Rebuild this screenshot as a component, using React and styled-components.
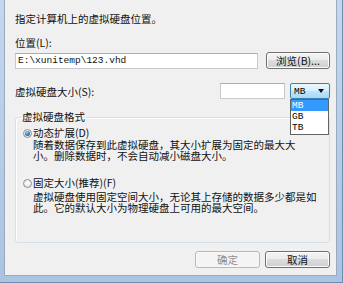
import React from "react";
import styled, { createGlobalStyle } from "styled-components";

const Global = createGlobalStyle`
  html, body { margin: 0; padding: 0; background: #f0f0f0; }
  * { box-sizing: border-box; }
`;

const FONT = `"Noto Sans CJK SC", "Noto Sans", sans-serif`;
const MONO = `"Liberation Mono", "DejaVu Sans Mono", monospace`;

const Frame = styled.div`
  width: 343px;
  height: 283px;
  background: linear-gradient(180deg, #c3d7ee 0%, #aac3e1 100%);
  padding: 0 6px 7px 4px;
  display: flex;
  box-shadow: inset -1px -1px 0 #6f8db3;
  font-family: ${FONT};
  font-size: 10.5px;
  color: #111;
`;

const Panel = styled.div`
  flex: 1;
  position: relative;
  display: flex;
  flex-direction: column;
  background: #f0f0f0;
  border-left: 1px solid #9aabbf;
  border-right: 1px solid #9aabbf;
  border-bottom: 1px solid #9aabbf;
  padding: 12px 6px 0 10px;
`;

const Text = styled.div`
  line-height: 13px;
  margin-top: ${(p) => p.$mt || 0}px;
  white-space: nowrap;
`;

const Row = styled.div`
  display: flex;
  align-items: center;
  gap: ${(p) => p.$gap || 0}px;
  margin-top: ${(p) => p.$mt || 0}px;
  height: ${(p) => p.$h || 17}px;
`;

const Input = styled.div`
  flex: ${(p) => (p.$w ? "none" : 1)};
  width: ${(p) => (p.$w ? `${p.$w}px` : "auto")};
  height: 16px;
  background: #fff;
  border: 1px solid #c5cad1;
  border-top-color: #abadb3;
  font-family: ${MONO};
  font-size: 9.5px;
  line-height: 14px;
  padding-left: 2px;
  color: #111;
  white-space: nowrap;
`;

const Button = styled.div`
  width: ${(p) => p.$w}px;
  height: 17px;
  border: 1px solid ${(p) => (p.$disabled ? "#b5b9bd" : "#707070")};
  border-radius: 3px;
  background: ${(p) =>
    p.$disabled
      ? "#f4f4f4"
      : "linear-gradient(180deg, #f4f4f4 0%, #ececec 45%, #dcdcdc 50%, #d0d0d0 100%)"};
  box-shadow: inset 0 0 0 1px ${(p) => (p.$disabled ? "#f8f8f8" : "#fcfcfc")};
  color: ${(p) => (p.$disabled ? "#8d8d8d" : "#111")};
  display: flex;
  align-items: center;
  justify-content: center;
  line-height: 13px;
  white-space: nowrap;
`;

const Spacer = styled.div`
  flex: 1;
`;

const Select = styled.div`
  width: 40px;
  height: 16px;
  border: 1px solid #3c7fb1;
  border-radius: 2px;
  background: linear-gradient(180deg, #eaf6fd 0%, #d9f0fc 45%, #bee6fd 50%, #a7d9f5 100%);
  display: flex;
  align-items: center;
  padding: 0 5px 0 3px;
  font-family: ${MONO};
  font-size: 9.5px;
  color: #000;
`;

const Arrow = styled.span`
  margin-left: auto;
  width: 0;
  height: 0;
  border-left: 3.5px solid transparent;
  border-right: 3.5px solid transparent;
  border-top: 4px solid #111;
`;

const DropList = styled.div`
  position: absolute;
  left: 285px;
  top: 99px;
  width: 39px;
  background: #fff;
  border: 1px solid #646464;
  padding: 0 0 1px;
  z-index: 2;
`;

const Option = styled.div`
  height: 11px;
  line-height: 11px;
  padding-left: 1px;
  font-family: ${MONO};
  font-size: 9.5px;
  background: ${(p) => (p.$active ? "#3399ff" : "transparent")};
  color: ${(p) => (p.$active ? "#fff" : "#000")};
`;

const Group = styled.fieldset`
  margin: 12px 0 0 0;
  padding: 0 0 29px 7px;
  border: 1px solid #d5dfe5;
  border-radius: 3px;
  box-shadow: inset 1px 1px 0 #fff;
  min-width: 0;
`;

const Legend = styled.legend`
  margin-left: -2px;
  padding: 0 1px;
  line-height: 12px;
`;

const RadioRow = styled.div`
  display: flex;
  align-items: center;
  height: 12px;
  line-height: 12px;
  margin-top: ${(p) => p.$mt}px;
  white-space: nowrap;
`;

const Radio = styled.span`
  width: 9px;
  height: 9px;
  border-radius: 50%;
  border: 1px solid #8e8f8f;
  background: radial-gradient(circle at 50% 40%, #ffffff 0%, #e6e6e6 70%, #cfcfcf 100%);
  margin-right: 1px;
  display: flex;
  align-items: center;
  justify-content: center;
  flex: none;

  &::after {
    content: "";
    display: ${(p) => (p.$checked ? "block" : "none")};
    width: 5px;
    height: 5px;
    border-radius: 50%;
    background: radial-gradient(circle at 40% 35%, #8fd3ff 0%, #1f6fc4 60%, #13508f 100%);
  }
`;

const Desc = styled.div`
  margin-left: 10px;
  margin-top: ${(p) => p.$mt || 0}px;
  line-height: 11px;
  white-space: nowrap;
`;

const Buttons = styled.div`
  display: flex;
  justify-content: flex-end;
  gap: 5px;
  margin-top: 8px;
`;

export default function App() {
  return (
    <>
      <Global />
      <Frame>
        <Panel>
          <Text>指定计算机上的虚拟硬盘位置。</Text>
          <Text $mt={11}>位置(L):</Text>
          <Row $mt={3} $gap={8}>
            <Input>E:\xunitemp\123.vhd</Input>
            <Button $w={64}>浏览(B)...</Button>
          </Row>
          <Row $mt={14} $h={16} $gap={5}>
            <Text>虚拟硬盘大小(S):</Text>
            <Spacer />
            <Input $w={65} />
            <Select>
              MB
              <Arrow />
            </Select>
          </Row>
          <DropList>
            <Option $active>MB</Option>
            <Option>GB</Option>
            <Option>TB</Option>
          </DropList>
          <Group>
            <Legend>虚拟硬盘格式</Legend>
            <RadioRow $mt={4}>
              <Radio $checked />
              动态扩展(D)
            </RadioRow>
            <Desc>
              随着数据保存到此虚拟硬盘，其大小扩展为固定的最大大
              <br />
              小。删除数据时，不会自动减小磁盘大小。
            </Desc>
            <RadioRow $mt={16}>
              <Radio />
              固定大小(推荐)(F)
            </RadioRow>
            <Desc $mt={2}>
              虚拟硬盘使用固定空间大小，无论其上存储的数据多少都是如
              <br />
              此。它的默认大小为物理硬盘上可用的最大空间。
            </Desc>
          </Group>
          <Buttons>
            <Button $w={65} $disabled>
              确定
            </Button>
            <Button $w={65}>取消</Button>
          </Buttons>
        </Panel>
      </Frame>
    </>
  );
}
